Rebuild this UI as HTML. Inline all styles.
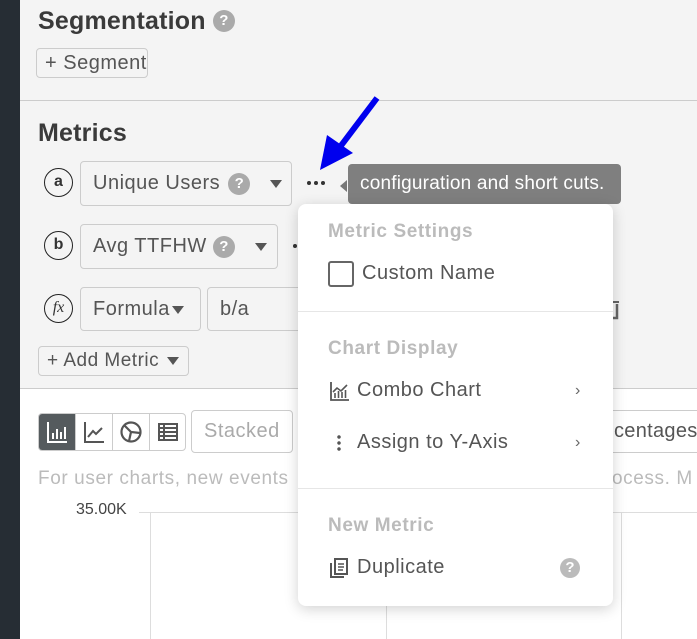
<!DOCTYPE html>
<html><head><meta charset="utf-8"><style>
*{box-sizing:border-box;margin:0;padding:0}
body{width:697px;height:639px;overflow:hidden;position:relative;font-family:"Liberation Sans",Arial,sans-serif;background:#fff;color:#444;letter-spacing:0.5px}
.abs{position:absolute}
.side{left:0;top:0;width:20px;height:639px;background:#262d34}
.top{left:20px;top:0;width:677px;height:389px;background:#f4f4f4;border-bottom:1px solid #ccc}
.hr{left:20px;top:100px;width:677px;height:1px;background:#ccc}
h2{position:absolute;font-size:25px;font-weight:bold;color:#3a3a3a;letter-spacing:0.2px}
.q{display:inline-block;width:22px;height:22px;border-radius:50%;background:#aaa;color:#fff;font-size:15px;font-weight:bold;text-align:center;line-height:22px;vertical-align:middle;letter-spacing:0}
.btn{position:absolute;border:1px solid #ccc;border-radius:4px;background:#f4f4f4;font-size:20px;color:#555;padding-left:8px;white-space:nowrap}
.circ{position:absolute;width:29px;height:29px;border:1.3px solid #222;border-radius:50%;font-size:16px;font-weight:bold;text-align:center;line-height:26px;color:#333;letter-spacing:0}
.tri{display:inline-block;width:0;height:0;border-left:6px solid transparent;border-right:6px solid transparent;border-top:8px solid #555;vertical-align:middle}
.menu{left:298px;top:204px;width:315px;height:402px;background:#fff;border-radius:8px;box-shadow:0 3px 14px rgba(0,0,0,.18)}
.mh{position:absolute;left:30px;font-size:19px;font-weight:bold;color:#bbb;letter-spacing:0.6px}
.mi{position:absolute;left:30px;font-size:20px;color:#555;letter-spacing:0.5px}
.sep{position:absolute;left:0;width:315px;height:1px;background:#e6e6e6}
.chev{position:absolute;left:277px;font-size:16px;color:#666}
.dots{position:absolute;display:flex;gap:3px}
.dots i{display:block;width:4px;height:4px;border-radius:50%;background:#333}
</style></head><body>
<div class="abs side"></div>
<div class="abs top"></div>
<div class="abs hr"></div>
<h2 style="left:38px;top:7px">Segmentation <span class="q" style="margin-top:-3px">?</span></h2>
<div class="btn" style="left:36px;top:48px;width:112px;height:30px;line-height:28px">+ Segment</div>
<h2 style="left:38px;top:119px">Metrics</h2>

<div class="circ" style="left:44px;top:168px">a</div>
<div class="btn" style="left:80px;top:161px;width:212px;height:45px;line-height:43px;padding-left:12px">Unique Users <span class="q" style="margin:0 10px 0 2px">?</span> <span class="tri" style="margin-left:4px"></span></div>
<div class="dots" style="left:307px;top:181px"><i></i><i></i><i></i></div>
<div class="circ" style="left:44px;top:231px">b</div>
<div class="btn" style="left:80px;top:224px;width:198px;height:45px;line-height:43px;padding-left:12px">Avg TTFHW <span class="q" style="margin:0 10px 0 0">?</span> <span class="tri" style="margin-left:4px"></span></div>
<div class="dots" style="left:293px;top:244px"><i></i></div>
<div class="circ" style="left:44px;top:294px;font-style:italic;font-family:'Liberation Serif',serif;font-weight:normal;font-size:16px">fx</div>
<div class="btn" style="left:80px;top:287px;width:121px;height:44px;line-height:42px;padding-left:12px">Formula <span class="tri" style="margin-left:-4px"></span></div>
<div class="btn" style="left:207px;top:287px;width:100px;height:44px;line-height:42px;padding-left:12px">b/a</div>
<svg class="abs" style="left:605px;top:300px" width="16" height="22"><path d="M2 2h12" stroke="#666" stroke-width="2"/><path d="M12 4v14h-4" stroke="#666" stroke-width="2.5" fill="none"/></svg>
<div class="btn" style="left:38px;top:346px;width:151px;height:30px;line-height:28px;font-size:19px">+ Add Metric <span class="tri" style="margin-left:2px"></span></div>

<div class="abs" style="left:340px;top:180px;width:0;height:0;border-top:6px solid transparent;border-bottom:6px solid transparent;border-right:7px solid #777"></div>
<div class="abs" style="left:348px;top:164px;width:273px;height:40px;background:#7f7f7f;border-radius:4px;color:#fff;font-size:19px;line-height:40px;padding-left:12px;white-space:nowrap;letter-spacing:0.2px">configuration and short cuts.</div>
<svg class="abs" style="left:315px;top:95px" width="70" height="80"><line x1="62" y1="3" x2="25" y2="52" stroke="#0000ee" stroke-width="6"/><polygon points="5,75 12,40 38,58" fill="#0000ee"/></svg>

<div class="abs" style="left:38px;top:413px;width:148px;height:38px;border:1px solid #ccc;border-radius:4px;overflow:hidden;display:flex">
 <div style="width:37px;background:#555b5e;border-right:1px solid #ccc;display:flex;align-items:center;justify-content:center"><svg width="24" height="24"><path d="M3 2v20h19" stroke="#fff" stroke-width="2" fill="none"/><path d="M8 19v-6M12 19v-10M16 19v-7M20 19v-12" stroke="#fff" stroke-width="2"/></svg></div>
 <div style="width:37px;border-right:1px solid #ccc;display:flex;align-items:center;justify-content:center"><svg width="24" height="24"><path d="M3 2v20h19" stroke="#555" stroke-width="2" fill="none"/><path d="M6 17l5-6 3 3 6-6" stroke="#555" stroke-width="2" fill="none"/></svg></div>
 <div style="width:37px;border-right:1px solid #ccc;display:flex;align-items:center;justify-content:center"><svg width="24" height="24"><circle cx="12" cy="12" r="9.5" stroke="#555" stroke-width="2.2" fill="none"/><path d="M5.5 5.5L12 12L21 13M12 12L10 21" stroke="#555" stroke-width="2.2" fill="none"/></svg></div>
 <div style="flex:1;display:flex;align-items:center;justify-content:center"><svg width="24" height="24"><rect x="3" y="4" width="18" height="16" stroke="#555" stroke-width="2" fill="none"/><path d="M3 8h18M3 12h18M3 16h18M8 4v16" stroke="#555" stroke-width="2"/></svg></div>
</div>
<div class="btn" style="left:191px;top:410px;width:102px;height:43px;line-height:41px;background:#fff;color:#aaa;padding-left:12px">Stacked</div>
<div class="abs" style="left:578px;top:410px;width:130px;height:43px;border:1px solid #ccc;border-radius:4px"></div>
<div class="abs" style="left:614px;top:420px;font-size:20px;color:#555;white-space:nowrap;letter-spacing:0.3px">centages</div>
<div class="abs" style="left:38px;top:468px;font-size:19px;color:#bbb;white-space:nowrap;letter-spacing:0.6px">For user charts, new events</div>
<div class="abs" style="left:612px;top:468px;font-size:19px;color:#bbb;white-space:nowrap;letter-spacing:0.6px">ocess. M</div>
<div class="abs" style="left:76px;top:501px;font-size:16px;color:#444;letter-spacing:0">35.00K</div>
<div class="abs" style="left:139px;top:512px;width:560px;height:1px;background:#ddd"></div>
<div class="abs" style="left:150px;top:512px;width:1px;height:127px;background:#ddd"></div>
<div class="abs" style="left:386px;top:512px;width:1px;height:127px;background:#ddd"></div>
<div class="abs" style="left:621px;top:512px;width:1px;height:127px;background:#ddd"></div>

<div class="abs menu">
 <div class="mh" style="top:17px">Metric Settings</div>
 <div class="abs" style="left:30px;top:57px;width:26px;height:26px;border:2.5px solid #666;border-radius:3px"></div>
 <div class="mi" style="left:64px;top:58px">Custom Name</div>
 <div class="sep" style="top:107px"></div>
 <div class="mh" style="top:134px">Chart Display</div>
 <svg class="abs" style="left:31px;top:176px" width="22" height="22"><path d="M2 2v18h18" stroke="#555" stroke-width="1.8" fill="none"/><path d="M6 18v-5M9.5 18v-7M13 18v-6M16.5 18v-8M4 12l4-4 4 3 6-6" stroke="#555" stroke-width="1.6" fill="none"/></svg>
 <div class="mi" style="left:59px;top:175px">Combo Chart</div>
 <div class="chev" style="top:178px">›</div>
 <div class="abs" style="left:39px;top:230px;width:4px;height:18px;background:radial-gradient(circle,#555 1.5px,transparent 2px) 0 0/4px 6px"></div>
 <div class="mi" style="left:59px;top:227px">Assign to Y-Axis</div>
 <div class="chev" style="top:230px">›</div>
 <div class="sep" style="top:284px"></div>
 <div class="mh" style="top:311px">New Metric</div>
 <svg class="abs" style="left:31px;top:353px" width="22" height="22"><rect x="6" y="2" width="12" height="15" stroke="#555" stroke-width="2" fill="none"/><path d="M2 6v14h13" stroke="#555" stroke-width="2" fill="none"/><path d="M9 7h6M9 10h6M9 13h5" stroke="#555" stroke-width="1.6"/></svg>
 <div class="mi" style="left:59px;top:352px">Duplicate</div>
 <div class="q" style="position:absolute;left:262px;top:354px;width:20px;height:20px;line-height:20px;background:#bbb">?</div>
</div>
</body></html>
